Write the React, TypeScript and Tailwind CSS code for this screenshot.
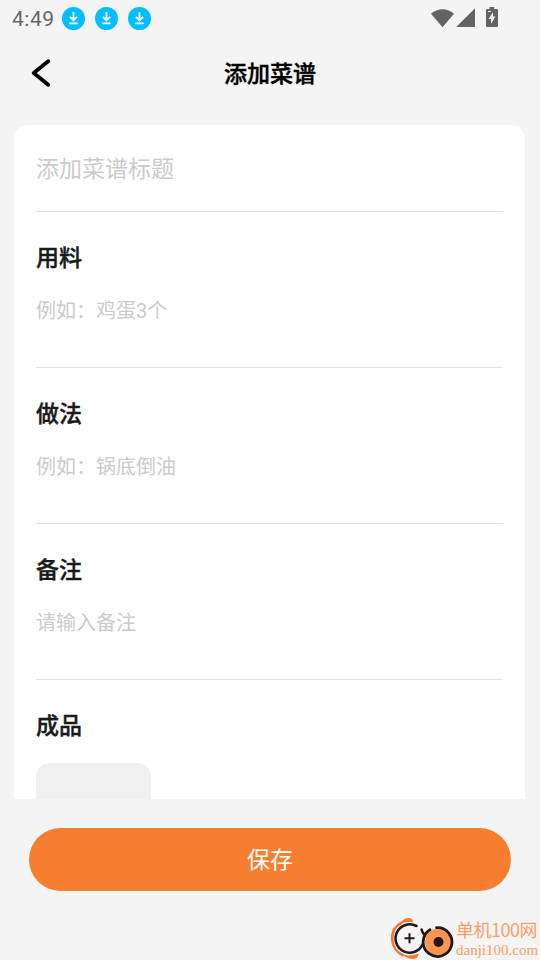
import React from 'react'

interface SectionProps {
  title : string;
  placeholder : string;
}

function DownloadBadge() {
  return (
    <svg viewBox="0 0 23 23" className="h-[23px] w-[23px]">
      <circle cx="11.5" cy="11.5" r="11.5" fill="#00bfff" />
      <path d="M11.5 5v8.2M7.9 9.9l3.6 3.6 3.6-3.6M7.4 16.4h8.2" fill="none" stroke="#fff" strokeWidth="1.8" />
    </svg>
  )
}

function StatusBar() {
  return (
    <div className="flex h-[37px] items-center justify-between pl-3 pr-[42px]">
      <div className="flex items-center">
        <span className="w-[50px] pt-[2px] text-[21px] leading-[35px] tracking-[0.5px] text-[#666]">4:49</span>
        <div className="flex gap-[10px]">
          <DownloadBadge />
          <DownloadBadge />
          <DownloadBadge />
        </div>
      </div>
      <svg viewBox="0 0 68 22" className="mb-[2px] h-[22px] w-[68px]" fill="#636363">
        <path d="M1 6.7C7.5 .7 17.5 .7 24 6.7L12.5 20.2Z" />
        <path d="M45 1.2V20H26.2Z" />
        <path fillRule="evenodd" d="M59.5 0h4.7v2H67a1 1 0 0 1 1 1v16a1 1 0 0 1-1 1H57a1 1 0 0 1-1-1V3a1 1 0 0 1 1-1h2.5ZM63 5.2l-4.5 6.8h2.6v5l4.3-7.4h-2.4Z" />
        <path d="M58 4h3v1h-3z" fill="#f4f4f4" />
      </svg>
    </div>
  )
}

function Section({ title, placeholder }: SectionProps) {
  return (
    <div className="h-[156px] border-b border-[#e3e3e3] pt-[30px]">
      <h2 className="text-[23px] font-medium leading-[34px] text-[#1a1a1a] [-webkit-text-stroke:0.4px]">{title}</h2>
      <p className="mt-[20px] text-[20px] leading-[30px] text-[#cbcbcb]">{placeholder}</p>
    </div>
  )
}

function Watermark() {
  return (
    <div className="absolute bottom-0 right-0 flex h-[45px] w-[151px]">
      <svg viewBox="0 0 66 45" className="h-[45px] w-[66px] shrink-0" fill="none">
        <path d="M13 7.5C6 11 2.8 17.500 3.200 24.500C3.500 31 7.500 37.500 14.500 40.500" stroke="#f6792f" strokeWidth="2.600" />
        <path d="M8.500 10.500C13 6 15.500 3 19.500 3C22.800 3 24.200 5 23.800 7.400C18.500 6.500 13.500 7.500 8.500 10.500Z" fill="#f6792f" />
        <path d="M10.500 38C16 41.200 23 41 29.500 38.500C29.500 42.500 26.500 44.200 23.500 44C18 43.300 14.500 41.500 10.500 38Z" fill="#f6792f" />
        <path d="M27.500 11A14.200 14.200 0 1 0 33.800 29" stroke="#24191a" strokeWidth="2.600" strokeLinecap="round" />
        <path d="M32.600 14.500c.2 2.500 1.800 4 3 5.500" stroke="#24191a" strokeWidth="2.600" strokeLinecap="round" />
        <path d="M20.500 18.300v10M15.500 23.300h10" stroke="#24191a" strokeWidth="2" />
        <circle cx="49.500" cy="27" r="13.500" fill="#ff944f" />
        <path d="M41 14.800A14.400 14.400 0 1 0 47.500 12.700" stroke="#24191a" strokeWidth="2.800" strokeLinecap="round" />
        <circle cx="49.500" cy="27" r="5" fill="#24191a" />
      </svg>
      <div className="flex flex-col pt-[3px] text-[#ff9c64]">
        <span className="whitespace-nowrap pl-px font-['Noto_Sans_CJK_SC',sans-serif] text-[18px] leading-[22px] tracking-[-0.5px]">单机100网</span>
        <span className="whitespace-nowrap pl-px pt-[2px] font-['Liberation_Serif',serif] text-[15px] leading-[17px]">danji100.com</span>
      </div>
    </div>
  )
}

function App() {
  return (
    <div className="relative flex h-[960px] w-[540px] flex-col overflow-hidden bg-[#f4f4f4] font-[Roboto,'Noto_Sans_CJK_SC',sans-serif]">
      <StatusBar />

      <header className="grid h-[72px] shrink-0 grid-cols-[60px_1fr_60px] items-center">
        <button type="button" aria-label="返回" className="pl-[31px]">
          <svg viewBox="0 0 20 28" className="h-7 w-5" fill="none">
            <path d="M17.2 2.2L2.7 14L17.2 25.8" stroke="#000" strokeWidth="3.8" strokeLinecap="round" strokeLinejoin="round" />
          </svg>
        </button>
        <h1 className="pt-1 text-center text-[23px] font-medium leading-[34px] text-black [-webkit-text-stroke:0.4px]">添加菜谱</h1>
      </header>

      <main className="ml-[14px] mr-[15px] mt-4 h-[674px] shrink-0 overflow-hidden rounded-t-[14px] bg-white px-[22px]">
        <div className="flex h-[87px] items-center border-b border-[#e3e3e3] pt-1">
          <p className="text-[23px] leading-[34px] text-[#cbcbcb]">添加菜谱标题</p>
        </div>
        <Section title="用料" placeholder="例如：鸡蛋3个" />
        <Section title="做法" placeholder="例如：锅底倒油" />
        <Section title="备注" placeholder="请输入备注" />
        <div className="pt-[30px]">
          <h2 className="text-[23px] font-medium leading-[34px] text-[#1a1a1a] [-webkit-text-stroke:0.4px]">成品</h2>
          <div className="mt-[19px] h-[115px] w-[115px] rounded-[14px] bg-[#f0f0f0]" />
        </div>
      </main>

      <footer className="px-[29px] pt-[29px]">
        <button type="button" className="h-[63px] w-full rounded-full bg-[#f67e30] pt-1 text-[23px] text-white">保存</button>
      </footer>

      <Watermark />
    </div>
  )
}

export default App
